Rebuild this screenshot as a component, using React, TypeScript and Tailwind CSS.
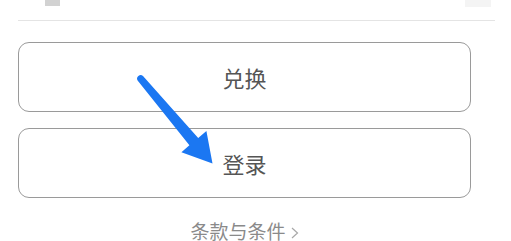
export default function App() {
  return (
    <div
      className="relative h-[241px] w-[511px] overflow-hidden bg-white"
      style={{ fontFamily: '"Noto Sans CJK SC", "Noto Sans", sans-serif' }}
    >
      <div className="flex flex-col pl-[18px] pr-[16px]">
        {/* cut-off header row */}
        <div className="flex h-[20px] items-start justify-between">
          <div className="ml-[27px] h-[6px] w-[15px] bg-[#d2d2d2]" />
          <div className="mr-[4px] h-[7px] w-[26px] bg-[#f4f4f4]" />
        </div>
        <div className="h-px bg-[#e4e4e4]" />

        <div className="mr-[24px] mt-[21px] flex flex-col gap-[16px]">
          <button className="flex h-[70px] items-center justify-center rounded-[11px] border border-[#9a9a9a] text-[22px] text-[#555]">
            兑换
          </button>
          <button className="flex h-[70px] items-center justify-center rounded-[11px] border border-[#9a9a9a] text-[22px] text-[#555]">
            登录
          </button>
        </div>

        <div className="mr-[24px] mt-[21px] flex items-center justify-center text-[19px] leading-[24px] text-[#8a8a8a]">
          条款与条件
          <svg className="ml-[5px] mt-[3px]" width="8" height="12" viewBox="0 0 8 12">
            <polyline points="1,1 6.5,6 1,11" fill="none" stroke="#a8a8a8" strokeWidth="1.2" />
          </svg>
        </div>
      </div>

      {/* annotation arrow */}
      <svg
        className="pointer-events-none absolute inset-0"
        width="511"
        height="241"
        viewBox="0 0 511 241"
      >
        <path
          d="M137.6 80.6 A3.6 3.6 0 0 1 143 76 L198.2 138 L206.4 131 L212.5 163.5 L181.4 152.2 L189.4 145.2 Z"
          fill="#1b77f2"
        />
      </svg>
    </div>
  );
}
